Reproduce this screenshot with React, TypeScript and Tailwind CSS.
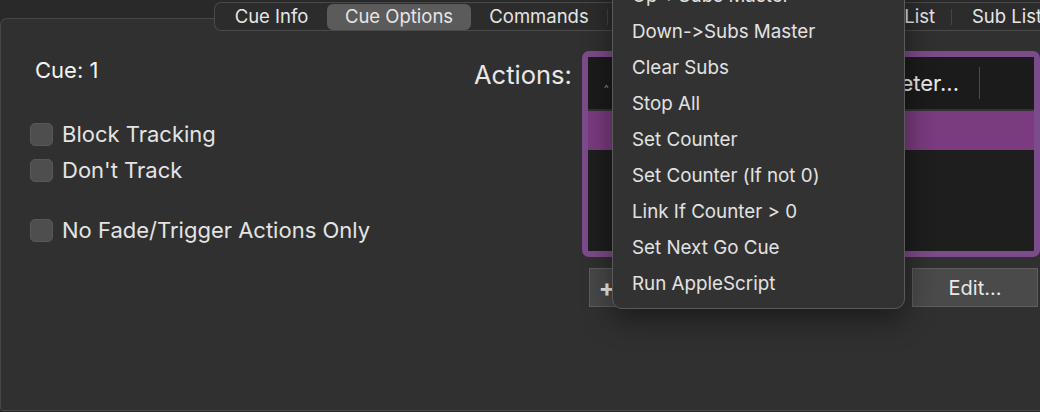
import React from "react";

const tabs = [
  { label: "Cue Info", w: "w-[111px]", sep: false, active: false },
  { label: "Cue Options", w: "w-[144px]", sep: false, active: true },
  { label: "Commands", w: "w-[137px]", sep: true, active: false },
  { label: "Sub Fades", w: "w-[240px]", sep: true, active: false },
  { label: "Cue List", w: "w-[104px]", sep: true, active: false },
  { label: "Sub List", w: "w-[110px]", sep: false, active: false },
];

const menuItems = [
  "Up->Subs Master",
  "Down->Subs Master",
  "Clear Subs",
  "Stop All",
  "Set Counter",
  "Set Counter (If not 0)",
  "Link If Counter > 0",
  "Set Next Go Cue",
  "Run AppleScript",
];

function Check({ label, className = "" }: { label: string; className?: string }) {
  return (
    <div className={"flex items-center gap-[9px] " + className}>
      <div className="w-[23px] h-[23px] rounded-[5px] bg-[#4e4e4e] border border-[#585858]" />
      <span className="text-[22px] text-[#e4e4e4] leading-[26px]">{label}</span>
    </div>
  );
}

export default function App() {
  return (
    <div className="w-[1040px] h-[412px] bg-[#292929] relative overflow-hidden font-['Inter',sans-serif] [font-feature-settings:'calt'_0,'liga'_0] flex flex-col">
      {/* tab bar */}
      <div className="pt-[2px] pl-[214px] relative z-10">
        <div className="flex h-[29px] items-center rounded-l-[7px] border border-r-0 border-[#4a4a4a] bg-[#2c2c2c] pl-[1px]">
          {tabs.map((t) => (
            <div key={t.label} className={"flex items-center shrink-0 " + t.w}>
              <div
                className={
                  "flex-1 h-[26px] flex items-center justify-center text-[18.5px] text-[#e6e6e6] rounded-[6px] " +
                  (t.active ? "bg-[#5b5b5b]" : "")
                }
              >
                {t.label}
              </div>
              {t.sep && <div className="w-px h-[16px] bg-[#444]" />}
            </div>
          ))}
        </div>
      </div>

      {/* main panel */}
      <div className="-mt-[13px] h-[393px] bg-[#303030] border-t border-l border-b border-[#474747] rounded-tl-[7px] rounded-bl-[4px] flex">
        {/* left options */}
        <div className="w-[473px] pl-[29px] pt-[38px] shrink-0">
          <div className="text-[22px] text-[#f2f2f2] leading-[26px] pl-[5px]">Cue: 1</div>
          <Check label="Block Tracking" className="mt-[38px]" />
          <Check label="Don't Track" className="mt-[10px]" />
          <Check label="No Fade/Trigger Actions Only" className="mt-[34px]" />
        </div>

        {/* actions label */}
        <div className="w-[108px] shrink-0 pt-[39px]">
          <div className="text-[25.5px] text-[#e8e8e8] leading-[34px]">Actions:</div>
        </div>

        {/* actions table */}
        <div className="flex-1 pt-[32px] relative">
          <div className="h-[206px] border-[6px] border-[#7c4b8b] rounded-[7px] bg-[#1e1e1e] flex flex-col">
            <div className="h-[54px] bg-[#1b1b1b] flex items-center border-b-2 border-[#333]">
              <span className="ml-[16px] text-[10px] text-[#999] mt-[10px]">^</span>
              <span className="ml-auto text-[22px] text-[#ececec]">Parameter...</span>
              <div className="w-px h-[32px] bg-[#4a4a4a] ml-[20px] mr-[54px]" />
            </div>
            <div className="h-[39px] bg-[#7a3b7f]" />
            <div className="flex-1" />
          </div>
          <div className="flex justify-between pl-[7px] pr-[2px] mt-[11px]">
            <div className="w-[36px] h-[39px] bg-[#484848] border border-[#5e5e5e] flex items-center justify-center text-[24px] font-bold text-[#f0f0f0]">
              +
            </div>
            <div className="w-[126px] h-[39px] bg-[#4a4a4a] border border-[#5e5e5e] flex items-center justify-center text-[20px] text-[#e8e8e8]">
              Edit...
            </div>
          </div>
        </div>
      </div>

      {/* dropdown menu overlay */}
      <div className="absolute left-[612px] top-[-29px] w-[293px] h-[338px] z-20 bg-[#323232] border border-[#5a5a5a] rounded-b-[10px] shadow-[0_10px_30px_rgba(0,0,0,0.45)] pt-[6px] px-[19px]">
        {menuItems.map((m) => (
          <div key={m} className="h-[36px] flex items-center text-[18.8px] text-[#e2e2e2]">
            {m}
          </div>
        ))}
      </div>
    </div>
  );
}
